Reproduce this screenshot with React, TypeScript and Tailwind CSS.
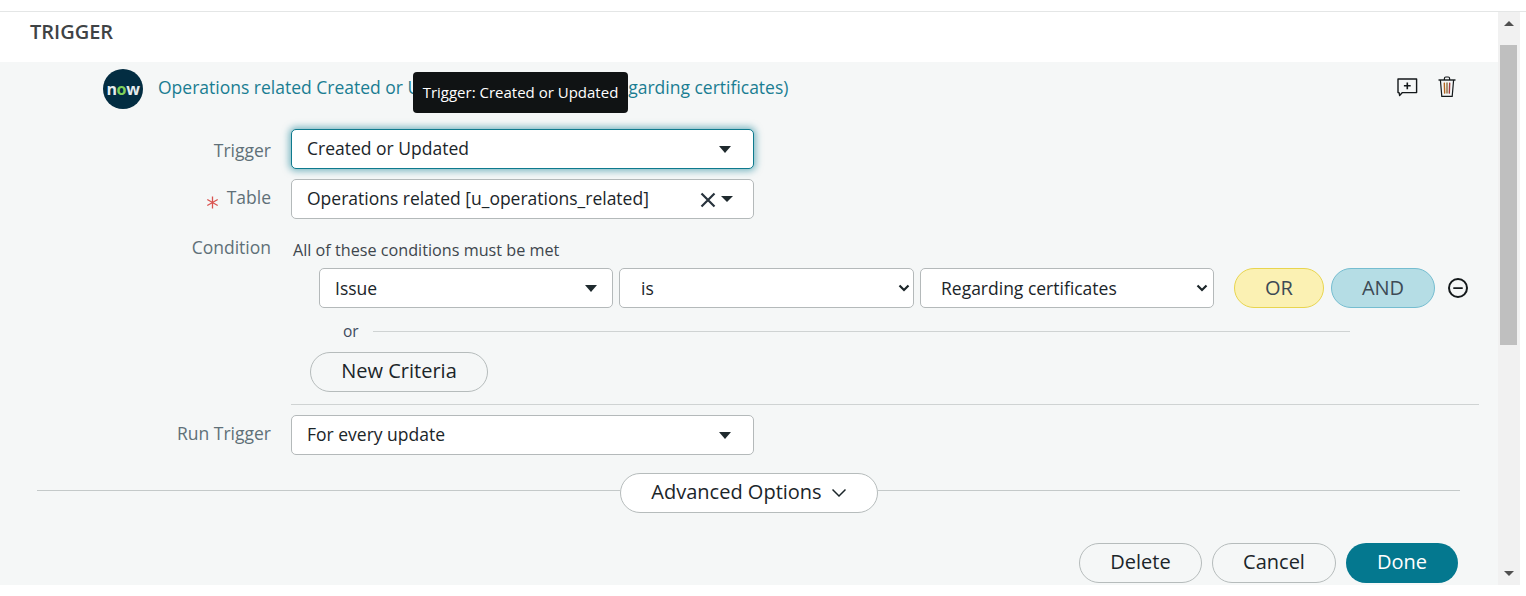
import { Minus } from "lucide-react";

const caret = "w-0 h-0 border-x-[6px] border-x-transparent border-t-[7px] border-t-[#1f2a2e]";
const field = "h-10 bg-white border border-[#b4b9ba] rounded-[5px] flex items-center text-[#1b2529]";
const pill = "h-10 pb-[2px] rounded-full border border-[#b6bcbc] flex items-center justify-center text-[20px] text-[#1b2529]";
const label = "w-[271px] shrink-0 text-right text-[#5f7078] text-[17.5px]";

function Chevron() {
  return (
    <svg width="14" height="14" viewBox="0 0 14 14" fill="none" stroke="#1b2529" strokeWidth="1.5" className="shrink-0 mt-[2px]">
      <path d="M0.5 3.500L7 10l6.500-6.500" />
    </svg>
  );
}

function CommentPlus() {
  return (
    <svg width="22" height="20" viewBox="0 0 22 20" fill="none" stroke="#14191b" strokeWidth="1.4">
      <path d="M2 2h18.600v13.600H6.400L3.600 18.400l-.5-2.800H2z" strokeLinejoin="round" />
      <path d="M11.300 5.400v6.800M7.900 8.800h6.800" strokeWidth="1.6" />
    </svg>
  );
}

function Trash() {
  return (
    <svg width="20" height="22" viewBox="0 0 20 22" fill="none" stroke="#14191b" strokeWidth="1.2">
      <path d="M1.500 4h17" strokeWidth="1.4" />
      <path d="M7.400 4V2.400c0-.9.6-1.400 1.400-1.400h2.400c.8 0 1.400.5 1.400 1.400V4" />
      <path d="M3.400 4l1.400 16.400h10.400L16.600 4" />
      <path d="M7.300 6.600l.4 11" stroke="#b5651d" strokeWidth="1.4" />
      <path d="M10 6.600v11" stroke="#8a6d3b" strokeWidth="1.4" />
      <path d="M12.700 6.600l-.4 11" stroke="#a33b3b" strokeWidth="1.4" />
    </svg>
  );
}

function NowLogo() {
  return (
    <div className="w-10 h-10 rounded-full bg-[#032d42] flex items-center justify-center shrink-0">
      <span className="text-[#e6ecee] font-bold text-[16px] leading-none tracking-[-0.3px]">
        n<span className="text-[#7fd15a]">o</span>w
      </span>
    </div>
  );
}

function NativeChevron() {
  return (
    <svg width="12" height="8" viewBox="0 0 12 8" fill="none" stroke="#1b2529" strokeWidth="2.2" className="shrink-0">
      <path d="M1.500 1.500L6 6l4.500-4.500" />
    </svg>
  );
}

function RequiredMark() {
  return (
    <svg width="13" height="13" viewBox="0 0 13 13" fill="none" stroke="#d9534f" strokeWidth="1.3" className="mr-[8px] mt-[10px]">
      <path d="M6.500 0.500v12M1.300 3.500l10.400 6M11.700 3.500l-10.400 6" />
    </svg>
  );
}

export default function App() {
  return (
    <div
      className="relative w-[1526px] h-[596px] overflow-hidden bg-white pt-[11px] text-[#1b2529]"
      style={{ fontFamily: '"Open Sans", "Noto Sans", sans-serif' }}
    >
      <div className="h-[574px] border-t border-[#e4e6e6] flex">
        <div className="w-[1498px] shrink-0 flex flex-col">
          {/* Section title */}
          <div className="h-[50px] pl-[30px] pt-[7px] text-[20px] leading-[26px] font-semibold text-[#3f4345]">TRIGGER</div>

          {/* Panel */}
          <div className="h-[523px] bg-[#f5f7f7] flex flex-col">
            <div className="h-10 mt-[7px] pl-[103px] flex items-center">
              <NowLogo />
              <span className="ml-[15px] text-[#1a7d92] text-[17.5px] whitespace-nowrap -mt-1">
                Operations related Created or Updated (where Issue is Regarding certificates)
              </span>
              <div className="ml-auto flex items-center gap-[19px] pr-[41px] -mt-1">
                <CommentPlus />
                <Trash />
              </div>
            </div>

            <div className="flex items-center mt-5 h-10">
              <div className={`${label} mt-[2px]`}>Trigger</div>
              <div className={`${field} ml-5 w-[463px] pl-[15px] pr-[22px] justify-between text-[17.5px] !border-[#0e7a8e] shadow-[0_0_7px_2px_rgba(20,130,150,0.55)]`}>
                <span className="-mt-[2px]">Created or Updated</span>
                <div className={caret} />
              </div>
            </div>

            <div className="flex items-center mt-[10px] h-10">
              <div className={`${label} -mt-1 flex justify-end items-center`}>
                <RequiredMark />
                Table
              </div>
              <div className={`${field} ml-5 w-[463px] pl-[15px] pr-[20px] text-[17.5px]`}>
                <span className="whitespace-nowrap -mt-[2px]">Operations related [u_operations_related]</span>
                <svg width="16" height="16" viewBox="0 0 16 16" fill="none" stroke="#28333d" strokeWidth="2.2" className="ml-auto mr-[5px] mt-[2px]">
                  <path d="M1.500 1.500l13 13M14.500 1.500l-13 13" />
                </svg>
                <div className="w-0 h-0 border-x-[6px] border-x-transparent border-t-[6px] border-t-[#1f2a2e]" />
              </div>
            </div>

            {/* Condition */}
            <div className="flex mt-[16px] h-6">
              <div className={`${label} leading-6`}>Condition</div>
              <div className="ml-[22px] mt-[3px] text-[#3e464d] text-[16.2px] leading-6 whitespace-nowrap">All of these conditions must be met</div>
            </div>
            <div className="flex items-center mt-[9px] ml-[319px]">
              <div className={`${field} w-[294px] pl-[15px] pr-[15px] justify-between text-[17.5px]`}>
                <span>Issue</span>
                <div className={caret} />
              </div>
              <div className={`${field} w-[295px] ml-[6px] pl-[21px] pr-[3px] justify-between text-[17.5px]`}>
                <span>is</span>
                <NativeChevron />
              </div>
              <div className={`${field} w-[294px] ml-[6px] pl-[20px] pr-[5px] justify-between text-[17.5px]`}>
                <span>Regarding certificates</span>
                <NativeChevron />
              </div>
              <div className="ml-5 w-[90px] h-10 rounded-full bg-[#fbf1b3] border border-[#e8d54f] flex items-center justify-center text-[20px] text-[#3d4a55]">OR</div>
              <div className="ml-[7px] w-[104px] h-10 rounded-full bg-[#b5dde5] border border-[#75bdd0] flex items-center justify-center text-[20px] text-[#3d4a55]">AND</div>
              <div className="ml-[13px] w-[20px] h-[20px] rounded-full border-2 border-[#14191b] flex items-center justify-center">
                <Minus size={14} strokeWidth={3} color="#14191b" />
              </div>
            </div>

            <div className="flex items-center mt-[13px] h-[20px] ml-[343px] w-[1007px]">
              <span className="text-[#3e4a5e] text-[15.5px] leading-5">or</span>
              <div className="ml-[14px] flex-1 border-t border-[#cfd3d3]" />
            </div>
            <div className="ml-[310px] mt-[11px]">
              <button className={`${pill} w-[178px]`}>New Criteria</button>
            </div>

            <div className="ml-[291px] mr-[19px] mt-3 border-t border-[#cfd3d3]" />

            <div className="flex items-center mt-[10px] h-10">
              <div className={`${label} -mt-1`}>Run Trigger</div>
              <div className={`${field} ml-5 w-[463px] pl-[15px] pr-[22px] justify-between text-[17.5px]`}>
                <span className="-mt-[2px]">For every update</span>
                <div className={caret} />
              </div>
            </div>

            {/* Advanced options */}
            <div className="flex items-center mt-[18px] ml-[37px] mr-[38px]">
              <div className="flex-1 border-t border-[#c4c9c9] mb-[6px]" />
              <button className={`${pill} w-[258px] bg-white gap-[10px]`}>
                Advanced Options
                <Chevron />
              </button>
              <div className="flex-1 border-t border-[#c4c9c9] mb-[6px]" />
            </div>

            {/* Footer */}
            <div className="flex justify-end gap-[10px] mt-[30px] pr-10">
              <button className={`${pill} w-[123px]`}>Delete</button>
              <button className={`${pill} w-[124px]`}>Cancel</button>
              <button className="h-10 pb-[2px] w-[112px] rounded-full bg-[#04788f] text-white text-[20px] flex items-center justify-center">Done</button>
            </div>
          </div>
        </div>

        {/* Scrollbar */}
        <div className="w-[22px] h-[573px] bg-[#f1f1f1] flex flex-col pl-[2px] pr-[3px]">
          <div className="h-[33px] pt-[9px] flex justify-center">
            <div className="w-0 h-0 border-x-[5px] border-x-transparent border-b-[5px] border-b-[#505050]" />
          </div>
          <div className="h-[300px] bg-[#bfbfbf]" />
          <div className="mt-auto h-[16px] pt-[2px] flex justify-center">
            <div className="w-0 h-0 border-x-[5px] border-x-transparent border-t-[5px] border-t-[#505050]" />
          </div>
        </div>
      </div>

      {/* Tooltip over the title */}
      <div className="absolute left-[413px] top-[72px] w-[215px] h-[41px] rounded-[4px] bg-[#101314] text-white text-[15px] flex items-center justify-center whitespace-nowrap">
        Trigger: Created or Updated
      </div>
    </div>
  );
}
